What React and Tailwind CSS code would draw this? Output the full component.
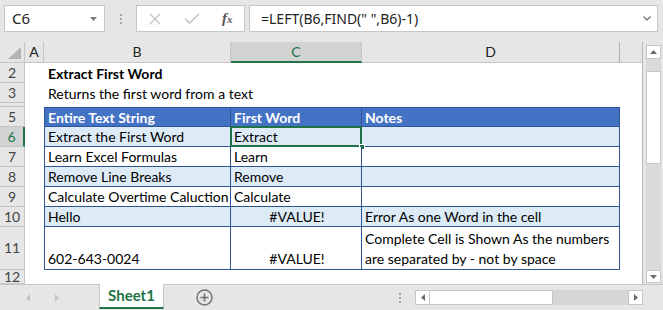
import React from 'react';

const rows = [
  { n: 6, b: 'Extract the First Word', c: 'Extract', band: true, active: true },
  { n: 7, b: 'Learn Excel Formulas', c: 'Learn' },
  { n: 8, b: 'Remove Line Breaks', c: 'Remove', band: true },
  { n: 9, b: 'Calculate Overtime Caluction', c: 'Calculate' },
  { n: 10, b: 'Hello', c: '#VALUE!', err: true, d: 'Error As one Word in the cell', band: true },
];

function RowHead({ n, active }) {
  return (
    <div
      className={`w-[25px] shrink-0 flex items-center justify-center border-b text-[14px] leading-none ${
        active
          ? 'bg-[#d2d2d2] text-[#217346] border-b-[#c6c6c6] border-r-2 border-r-[#217346]'
          : 'bg-[#e6e6e6] text-[#444] border-b-[#c6c6c6] border-r border-r-[#c6c6c6]'
      }`}
    >
      {n}
    </div>
  );
}

function Row({ n, h, active, children }) {
  return (
    <div className={`flex ${h}`}>
      <RowHead n={n} active={active} />
      <div className="w-[19px] shrink-0" />
      {children}
      <div className="flex-1" />
    </div>
  );
}

function Dots() {
  return (
    <div className="flex flex-col gap-[2px]">
      <span className="w-[2px] h-[2px] bg-[#a6a6a6]" />
      <span className="w-[2px] h-[2px] bg-[#a6a6a6]" />
      <span className="w-[2px] h-[2px] bg-[#a6a6a6]" />
    </div>
  );
}

export default function App() {
  return (
    <div className="w-[663px] h-[310px] overflow-hidden bg-[#e6e6e6] flex flex-col font-['Lato','Liberation_Sans',sans-serif] text-black">
      {/* formula bar */}
      <div className="h-[42px] shrink-0 flex items-start pt-[5px] pl-[4px] pr-[5px]">
        <div className="w-[101px] h-[27px] bg-white border border-[#c6c6c6] flex items-center justify-between pl-[7px] pr-[7px]">
          <span className="text-[15px] text-[#222] font-['Noto_Sans',sans-serif]">C6</span>
          <svg width="7" height="4" viewBox="0 0 7 4">
            <path d="M0 0h7L3.5 4z" fill="#7a7a7a" />
          </svg>
        </div>
        <div className="w-[31px] h-[27px] flex items-center justify-center">
          <Dots />
        </div>
        <div className="w-[109px] h-[27px] bg-white border border-[#c6c6c6] flex items-center">
          <svg className="ml-[12px]" width="12" height="12" viewBox="0 0 12 12">
            <path d="M1 1l10 10M11 1L1 11" stroke="#c2c2c2" strokeWidth="1.3" />
          </svg>
          <svg className="ml-[23px]" width="16" height="11" viewBox="0 0 16 11">
            <path d="M1 5.5l4.5 4.5L15 1" stroke="#c2c2c2" strokeWidth="1.6" fill="none" />
          </svg>
          <span className="ml-[22px] text-[15px] italic font-bold text-[#555] font-['Liberation_Serif',serif] leading-none">
            f<span className="text-[11px]">x</span>
          </span>
        </div>
        <div className="ml-[4px] flex-1 h-[27px] bg-white border border-[#c6c6c6] flex items-center pl-[11px] pr-[6px]">
          <span className="text-[14px] text-[#222] font-['Noto_Sans',sans-serif] whitespace-pre">=LEFT(B6,FIND(" ",B6)-1)</span>
          <svg className="ml-auto" width="8" height="5" viewBox="0 0 8 5">
            <path d="M0.5 0.5L4 4l3.5-3.5" stroke="#777" strokeWidth="1.4" fill="none" />
          </svg>
        </div>
      </div>

      {/* grid area */}
      <div className="h-[242px] shrink-0 flex">
        <div className="w-[643px] shrink-0 flex flex-col border-r border-[#b8b8b8]">
          {/* column headers */}
          <div className="h-[21px] shrink-0 flex text-[14px] text-[#222] leading-none">
            <div className="w-[25px] shrink-0 border-r border-b border-[#c6c6c6] flex items-end justify-end pr-[3px] pb-[3px]">
              <svg width="13" height="12" viewBox="0 0 13 12">
                <path d="M13 0V12H0z" fill="#b4b4b4" />
              </svg>
            </div>
            <div className="w-[19px] shrink-0 border-r border-b border-[#c6c6c6] flex items-center justify-center">A</div>
            <div className="w-[187px] shrink-0 border-r border-b border-[#c6c6c6] flex items-center justify-center">B</div>
            <div className="w-[131px] shrink-0 bg-[#d2d2d2] border-r border-r-[#c6c6c6] border-b-2 border-b-[#217346] flex items-center justify-center text-[#217346]">C</div>
            <div className="w-[258px] shrink-0 border-r border-b border-[#b0b0b0] border-b-[#c6c6c6] flex items-center justify-center">D</div>
            <div className="flex-1 border-b border-[#c6c6c6]" />
          </div>

          {/* sheet */}
          <div className="flex-1 bg-white flex flex-col text-[14px] leading-none">
            <Row n={2} h="h-[20px]">
              <div className="w-[187px] shrink-0 flex items-center pl-[4px] pt-[1px] font-bold whitespace-nowrap">Extract First Word</div>
              <div className="w-[389px] shrink-0" />
            </Row>
            <Row n={3} h="h-[20px]">
              <div className="w-[187px] shrink-0 flex items-center pl-[4px] pt-[1px] whitespace-nowrap">Returns the first word from a text</div>
              <div className="w-[389px] shrink-0" />
            </Row>
            <Row n="" h="h-[4px]">
              <div className="w-[576px] shrink-0" />
            </Row>
            <Row n={5} h="h-[20px]">
              <div className="w-[187px] shrink-0 bg-[#4472c4] border border-[#2f5597] flex items-center pl-[3px] pt-[1px] text-white font-bold">Entire Text String</div>
              <div className="w-[131px] shrink-0 bg-[#4472c4] border-y border-r border-[#2f5597] flex items-center pl-[3px] pt-[1px] text-white font-bold">First Word</div>
              <div className="w-[258px] shrink-0 bg-[#4472c4] border-y border-r border-[#2f5597] flex items-center pl-[3px] pt-[1px] text-white font-bold">Notes</div>
            </Row>
            {rows.map((r) => (
              <Row key={r.n} n={r.n} h="h-[20px]" active={r.active}>
                <div className={`w-[187px] shrink-0 border-x border-b border-[#2f5597] flex items-center pl-[3px] pt-[1px] whitespace-nowrap ${r.band ? 'bg-[#ddebf7]' : 'bg-white'}`}>
                  {r.b}
                </div>
                <div className={`relative w-[131px] shrink-0 border-r border-b border-[#2f5597] flex items-center pt-[1px] ${r.err ? 'justify-center pl-[2px]' : 'pl-[3px]'} ${r.band ? 'bg-[#ddebf7]' : 'bg-white'}`}>
                  {r.c}
                  {r.active && (
                    <>
                      <div className="absolute -left-px -top-px -right-px -bottom-px border-2 border-[#217346]" />
                      <div className="absolute -right-[4px] -bottom-[4px] w-[6px] h-[6px] bg-[#217346] border border-white" />
                    </>
                  )}
                </div>
                <div className={`w-[258px] shrink-0 border-r border-b border-[#2f5597] flex items-center pl-[3px] pt-[1px] whitespace-nowrap ${r.band ? 'bg-[#ddebf7]' : 'bg-white'}`}>
                  {r.d}
                </div>
              </Row>
            ))}
            <Row n={11} h="h-[43px]">
              <div className="w-[187px] shrink-0 border-x border-b border-[#2f5597] flex items-end pl-[3px] pb-[3px]">602-643-0024</div>
              <div className="w-[131px] shrink-0 border-r border-b border-[#2f5597] flex items-end justify-center pl-[2px] pb-[3px]">#VALUE!</div>
              <div className="w-[258px] shrink-0 border-r border-b border-[#2f5597] flex items-end pl-[3px] leading-[20px] pb-0">
                <span>
                  Complete Cell is Shown As the numbers
                  <br />
                  are separated by - not by space
                </span>
              </div>
            </Row>
            <Row n={12} h="h-[14px]">
              <div className="w-[576px] shrink-0" />
            </Row>
          </div>
        </div>

        {/* vertical scrollbar */}
        <div className="flex-1 flex flex-col pl-[3px] pr-[2px] pt-[3px] pb-[1px]">
          <div className="h-[14px] shrink-0 bg-white border border-[#c6c6c6] flex items-center justify-center">
            <svg width="7" height="4" viewBox="0 0 7 4">
              <path d="M0 4h7L3.5 0z" fill="#6a6a6a" />
            </svg>
          </div>
          <div className="h-[12px] shrink-0 bg-[#dadada]" />
          <div className="h-[93px] shrink-0 bg-white border border-[#c6c6c6]" />
          <div className="flex-1 bg-[#dadada]" />
          <div className="h-[13px] shrink-0 bg-white border border-[#c6c6c6] flex items-center justify-center">
            <svg width="7" height="4" viewBox="0 0 7 4">
              <path d="M0 0h7L3.5 4z" fill="#6a6a6a" />
            </svg>
          </div>
        </div>
      </div>

      {/* sheet tabs */}
      <div className="h-[26px] shrink-0 flex border-t border-[#c6c6c6]">
        <div className="w-[99px] shrink-0 flex items-center pl-[26px] gap-[25px]">
          <svg width="4" height="8" viewBox="0 0 4 8">
            <path d="M4 0v8L0 4z" fill="#c4c4c4" />
          </svg>
          <svg width="4" height="8" viewBox="0 0 4 8">
            <path d="M0 0v8l4-4z" fill="#c4c4c4" />
          </svg>
        </div>
        <div className="w-[65px] h-[25px] -mt-px shrink-0 bg-white border-x border-[#c6c6c6] border-b-2 border-b-[#217346] flex items-center justify-center text-[15px] font-bold text-[#217346]">
          Sheet1
        </div>
        <div className="w-[83px] shrink-0 flex items-center justify-center pr-[2px]">
          <svg width="17" height="17" viewBox="0 0 17 17">
            <circle cx="8.5" cy="8.5" r="7.5" stroke="#707070" strokeWidth="1.4" fill="none" />
            <path d="M8.5 4.5v8M4.5 8.5h8" stroke="#707070" strokeWidth="1.6" />
          </svg>
        </div>
        <div className="flex-1" />
        <div className="w-[16px] shrink-0 flex items-center justify-start">
          <Dots />
        </div>
        <div className="w-[228px] h-[15px] mt-[5px] shrink-0 flex mr-[20px]">
          <div className="w-[15px] shrink-0 bg-white border border-[#c6c6c6] flex items-center justify-center">
            <svg width="4" height="7" viewBox="0 0 4 7">
              <path d="M4 0v7L0 3.5z" fill="#6a6a6a" />
            </svg>
          </div>
          <div className="w-[123px] shrink-0 bg-white border-y border-r border-[#c6c6c6]" />
          <div className="flex-1 bg-[#d6d6d6]" />
          <div className="w-[15px] shrink-0 bg-white border border-[#c6c6c6] flex items-center justify-center">
            <svg width="4" height="7" viewBox="0 0 4 7">
              <path d="M0 0v7l4-3.5z" fill="#6a6a6a" />
            </svg>
          </div>
        </div>
      </div>
    </div>
  );
}
